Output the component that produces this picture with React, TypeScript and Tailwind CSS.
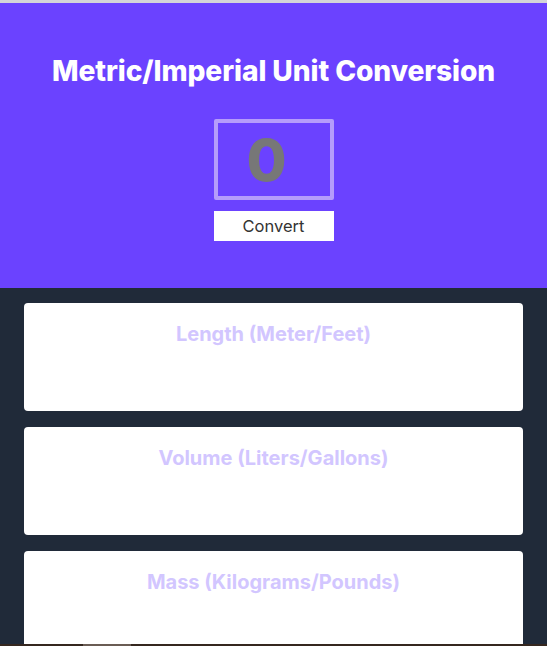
import React from "react";

export default function App() {
  const cards = ["Length (Meter/Feet)", "Volume (Liters/Gallons)", "Mass (Kilograms/Pounds)"];
  return (
    <div className="w-[547px] h-[646px] overflow-hidden flex flex-col bg-[#202a39]" style={{ fontFamily: "Inter, 'Noto Sans', sans-serif" }}>
      <div className="h-[3px] bg-[#d4d4d8] shrink-0" />
      <div className="h-[285px] shrink-0 bg-[#6b42ff] flex flex-col items-center pt-[50px]">
        <h1 className="text-[28.2px] leading-[36px] font-extrabold text-white tracking-[-0.1px]">Metric/Imperial Unit Conversion</h1>
        <div className="mt-[30px] w-[120px] h-[81px] border-[4px] border-[#b59cfb] rounded-[2px] flex items-center justify-center pr-[14px]">
          <span className="text-[58px] leading-none font-extrabold text-[#777777]">0</span>
        </div>
        <button className="mt-[11px] w-[120px] h-[30px] bg-white text-[16.5px] text-[#333333] flex items-center justify-center">
          Convert
        </button>
      </div>
      <div className="flex-1 min-h-0 flex flex-col gap-[16px] px-[24px] pt-[15px] overflow-hidden">
        {cards.map((c) => (
          <div key={c} className="h-[108px] shrink-0 bg-white rounded-[4px] flex justify-center pt-[18px]">
            <h2 className="text-[20px] leading-[26px] font-bold text-[#d2c6ff]">{c}</h2>
          </div>
        ))}
      </div>
      <div className="h-[2px] shrink-0 flex bg-[#35271f]">
        <div className="w-[83px]" />
        <div className="w-[48px] bg-[#6a5c54]" />
      </div>
    </div>
  );
}
